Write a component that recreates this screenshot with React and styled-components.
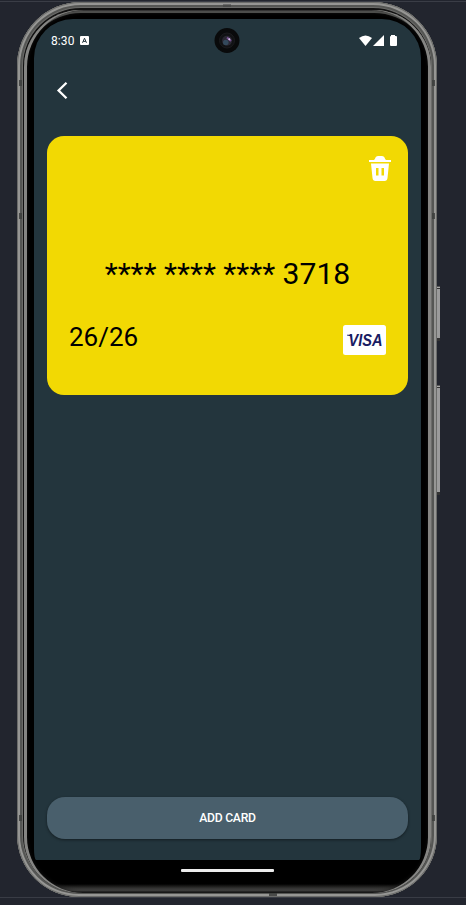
import React from "react";
import styled, { createGlobalStyle } from "styled-components";

const GlobalStyle = createGlobalStyle`
  body { margin: 0; background: #22252e; }
  * { box-sizing: border-box; }
`;

const Desktop = styled.div`
  width: 466px;
  height: 905px;
  overflow: hidden;
  padding: 2px 0 0 17px;
  background: linear-gradient(#22252e 1px, #3a3d46 1px, #3a3d46 2px, #22252e 2px, #22252e 897px, #393c45 897px, #393c45 898px, #22252e 898px);
  font-family: Roboto, sans-serif;
`;

const Shell = styled.div`
  position: relative;
  width: 420px;
  height: 895px;
  padding: 8px 6px 4px 7px;
  border-radius: 64px 64px 62px 62px;
  background: #111;
  box-shadow:
    inset 0 0 0 1px #6b6c6a,
    inset 0 0 0 3px #969694,
    inset 0 0 0 5px #555654,
    inset 0 0 0 6px #6b6b69;
`;

const SideButton = styled.div`
  position: absolute;
  left: 420px;
  top: ${(p) => p.$top}px;
  width: 3px;
  height: ${(p) => p.$height}px;
  background: linear-gradient(#555 1px, #aaa 1px, #aaa 2px, #333 2px, #333 3px, #9b9b9b 3px, #9b9b9b calc(100% - 3px), #333 calc(100% - 3px));
`;

const Seam = styled.div`
  position: absolute;
  left: ${(p) => p.$left}px;
  top: ${(p) => p.$top}px;
  width: ${(p) => (p.$wide ? 8 : 3)}px;
  height: ${(p) => (p.$wide ? 3 : 6)}px;
  background: #3d3e3d;
  opacity: ${(p) => (p.$faint ? 0.5 : 0.85)};
`;

const Bezel = styled.div`
  height: 883px;
  border-radius: 57px 57px 56px 56px;
  padding: 9px 10px 0;
  background: linear-gradient(#000 874px, #585856 881px, #111 882px);
  box-shadow:
    inset 3px 0 0 #858583,
    inset -3px 0 0 #858583,
    inset 0 1px 0 #333,
    inset 0 3px 0 #4c4d4b,
    inset 0 0 4px 2px #1c1c1c;
`;

const Screen = styled.main`
  width: 387px;
  height: 841px;
  border-radius: 39px 39px 2px 2px / 39px 39px 12px 12px;
  background: #23353d;
  padding: 0 13px;
  display: flex;
  flex-direction: column;
`;

const StatusBar = styled.header`
  height: 43px;
  padding: 0 10px 0 4px;
  display: flex;
  align-items: center;
  position: relative;
  color: #fff;
  font-size: 12px;
`;

const Clock = styled.span`
  width: 29px;
  line-height: 14px;
  letter-spacing: 0.1px;
`;

const StatusIcon = styled.svg`
  display: block;
  flex: none;
`;

const SignalIcons = styled(StatusIcon)`
  margin-left: auto;
`;

const Camera = styled.svg`
  position: absolute;
  left: 167px;
  top: 9px;
`;

const NavBar = styled.nav`
  height: 74px;
  padding: 19px 0 0 9px;
`;

const IconButton = styled.button`
  display: block;
  border: 0;
  padding: 0;
  background: none;
  svg { display: block; }
`;

const PaymentCard = styled.section`
  height: 259px;
  flex: none;
  border-radius: 17px;
  background: #f2d903;
  color: #000;
  padding: 20px 17px 0 22px;
  display: flex;
  flex-direction: column;
`;

const DeleteButton = styled(IconButton)`
  align-self: flex-end;
`;

const CardNumber = styled.div`
  margin-top: 74px;
  padding-right: 5px;
  line-height: 36px;
  font-size: 30.1px;
  text-align: center;
  white-space: pre;
`;

const CardFooter = styled.div`
  display: flex;
  justify-content: space-between;
  padding-right: 5px;
  margin-top: 30px;
`;

const Expiry = styled.span`
  font-size: 26px;
  line-height: 30px;
`;

const VisaBadge = styled.svg`
  display: block;
  margin-top: 3px;
`;

const VisaText = styled.text`
  font: italic 700 15.8px "Liberation Sans", sans-serif;
  fill: #181c63;
`;

const AddButton = styled.button`
  margin-top: auto;
  margin-bottom: 21px;
  height: 42px;
  flex: none;
  border: 0;
  border-radius: 18px;
  background: #495f6c;
  color: #fff;
  font: 500 12.2px/42px Roboto, sans-serif;
  letter-spacing: -0.25px;
  box-shadow: 0 1px 3px rgba(0, 0, 0, 0.45);
  padding: 0;
`;

const HomeIndicator = styled.div`
  width: 93px;
  height: 3px;
  margin: 9px auto 0 147px;
  background: #ececec;
  border-radius: 1px;
`;

export default function App() {
  return (
    <Desktop>
      <GlobalStyle />
      <Shell>
        <Seam $left={2} $top={78} />
        <Seam $left={2} $top={211} />
        <Seam $left={2} $top={813} />
        <Seam $left={415} $top={78} />
        <Seam $left={415} $top={211} />
        <Seam $left={415} $top={813} />
        <Seam $wide $faint $left={206} $top={2} />
        <Seam $wide $left={252} $top={891} />
        <SideButton $top={284} $height={55} />
        <SideButton $top={383} $height={110} />
        <Bezel>
          <Screen>
            <StatusBar>
              <Clock>8:30</Clock>
              <StatusIcon width="9" height="9" viewBox="0 0 9 9">
                <rect width="9" height="9" rx="1" fill="#fff" />
                <path d="M2.5 6.8 4.5 2.2 6.5 6.8M3.2 5.4h2.6" fill="none" stroke="#23353d" strokeWidth="1" />
              </StatusIcon>
              <Camera width="26" height="26" viewBox="0 0 26 26">
                <circle cx="13" cy="12.5" r="12.5" fill="#090a0b" />
                <circle cx="13" cy="12.5" r="7.5" fill="#111214" stroke="#1b1b1e" />
                <circle cx="13" cy="12.7" r="5" fill="#2a2833" />
                <circle cx="11.8" cy="14.5" r="2.8" fill="#34495c" />
                <path d="M13 9.5l4 3.5" stroke="#76508f" strokeWidth="2" />
                <circle cx="15.3" cy="11.2" r="1" fill="#dbc5ec" />
              </Camera>
              <SignalIcons width="39" height="12" viewBox="0 0 39 12">
                <path d="M0 3Q6.5-2 13 3L6.5 11Z" fill="#fff" />
                <path d="M14 11 25 0V11Z" fill="#fff" />
                <path d="M32 0h4v1h1q1 0 1 1v8q0 1-1 1h-5q-1 0-1-1V2q0-1 1-1Z" fill="#fff" />
              </SignalIcons>
            </StatusBar>
            <NavBar>
              <IconButton aria-label="Back">
                <svg width="14" height="19" viewBox="0 0 14 19">
                  <path d="M10.5 1.8 2.6 9.5 10.5 17.2" fill="none" stroke="#fff" strokeWidth="2.3" />
                </svg>
              </IconButton>
            </NavBar>
            <PaymentCard>
              <DeleteButton aria-label="Delete card">
                <svg width="22" height="26" viewBox="0 0 22 26">
                  <path d="M5 4Q6 3 6.5 1.5Q7 0 9 0H13Q15 0 15.5 1.5Q16 3 17 4H22V6H0V4Z" fill="#fff" />
                  <path fillRule="evenodd" d="M2 7.5H20L18.5 22Q18.2 25 15.5 25H6.5Q3.8 25 3.5 22ZM7 12V19.5H9.5V12ZM12.5 12V19.5H15V12Z" fill="#fff" />
                </svg>
              </DeleteButton>
              <CardNumber>**** **** **** 3718</CardNumber>
              <CardFooter>
                <Expiry>26/26</Expiry>
                <VisaBadge width="43" height="30" viewBox="0 0 43 30">
                  <rect width="43" height="30" rx="2.5" fill="#fff" />
                  <path d="M4 9.8H8.5L9 12Q7 10.7 4 10.4Z" fill="#181c63" />
                  <VisaText x="5.5" y="20.8" textLength="34" lengthAdjust="spacingAndGlyphs">VISA</VisaText>
                </VisaBadge>
              </CardFooter>
            </PaymentCard>
            <AddButton>ADD CARD</AddButton>
          </Screen>
          <HomeIndicator />
        </Bezel>
      </Shell>
    </Desktop>
  );
}
